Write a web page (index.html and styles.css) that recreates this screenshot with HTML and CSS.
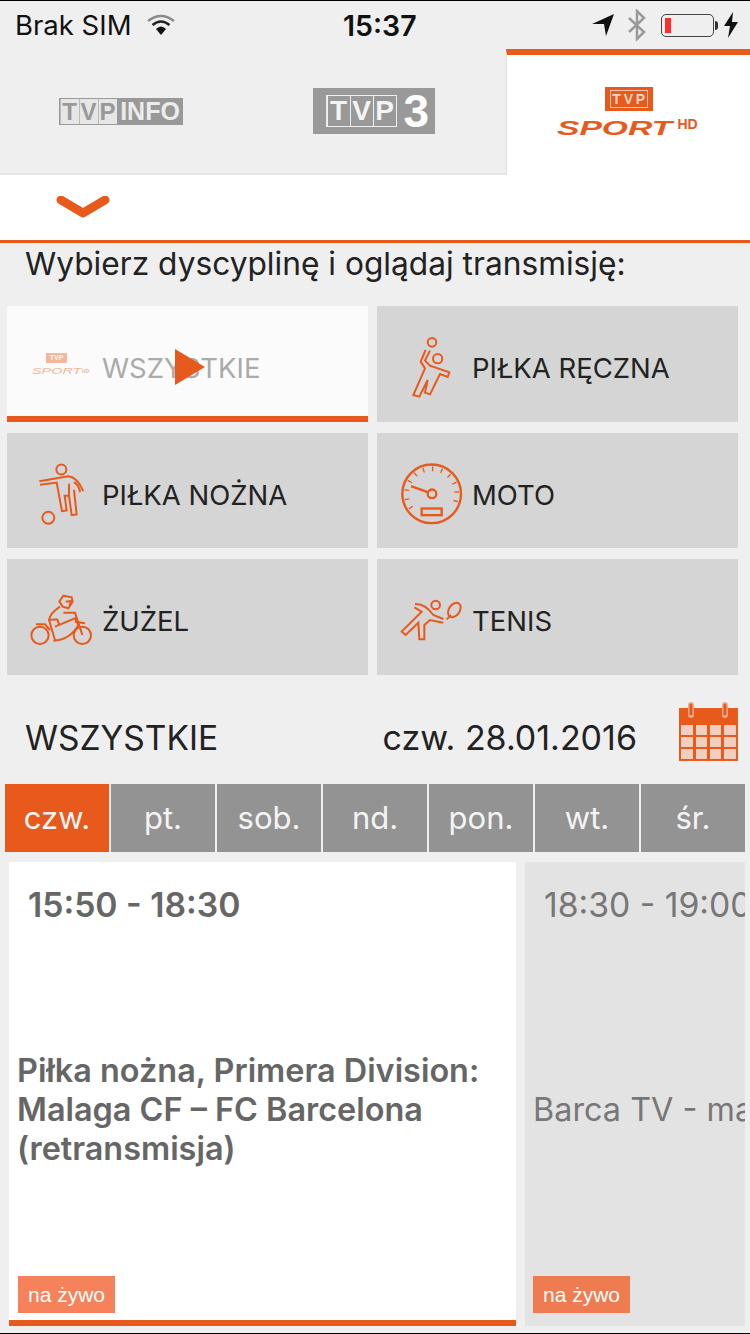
FILE: index.html
```html
<!DOCTYPE html>
<html lang="pl">
<head>
    <meta charset="UTF-8">
    <meta name="viewport" content="width=device-width, initial-scale=1.0">
    <title>TVP Sport</title>
    <link rel="stylesheet" href="styles.css">
</head>
<body>
<div class="screen">

    <!-- Status bar -->
    <div class="status-bar">
        <div class="status-left">
            <span>Brak SIM</span>
            <svg class="wifi" width="28" height="22" viewBox="0 0 28 22">
                <path d="M1 7 Q14 -3 27 7" fill="none" stroke="#8a8a8a" stroke-width="2.4"/>
                <path d="M5.500 11 Q14 4 22.500 11" fill="none" stroke="#222" stroke-width="2.600"/>
                <path d="M9 15 Q14 10 19 15 L14 21 Z" fill="#111"/>
            </svg>
        </div>
        <div class="status-time">15:37</div>
        <div class="status-right">
            <svg width="24" height="24" viewBox="0 0 24 24"><path d="M1 11 L23 1 L15 23 L13 11 Z" fill="#111"/></svg>
            <svg class="bt" width="20" height="32" viewBox="0 0 20 32"><path d="M2 9 L17 23 L10 30 L10 2 L17 9 L2 23" fill="none" stroke="#9a9a9a" stroke-width="2.500"/></svg>
            <div class="battery"><div class="battery-level"></div></div>
            <div class="battery-nub"></div>
            <svg class="bolt" width="14" height="26" viewBox="0 0 14 26"><path d="M9 0 L0 14 L6 14 L4 26 L14 10 L8 10 Z" fill="#111"/></svg>
        </div>
    </div>

    <!-- Kanaly -->
    <div class="channels">
        <div class="channel">
            <div class="logo-info">
                <div class="tvp-cells"><span>T</span><span>V</span><span>P</span></div>
                <span class="info-name">INFO</span>
            </div>
        </div>
        <div class="channel">
            <div class="logo-tvp3">
                <div class="tvp-cells"><span>T</span><span>V</span><span>P</span></div>
                <span class="three">3</span>
            </div>
        </div>
        <div class="channel active">
            <div class="logo-sport">
                <div class="sport-box"><div class="tvp-cells"><span>T</span><span>V</span><span>P</span></div></div>
                <div class="sport-name"><span class="sport-word">SPORT</span><span class="sport-hd">HD</span></div>
            </div>
        </div>
    </div>

    <div class="sub-bar">
        <svg width="54" height="24" viewBox="0 0 54 24"><path d="M5 4 L27 17 L49 4" fill="none" stroke="#e8591c" stroke-width="9" stroke-linecap="round" stroke-linejoin="round"/></svg>
    </div>

    <h1 class="lead">Wybierz dyscyplinę i oglądaj transmisję:</h1>

    <!-- Dyscypliny -->
    <div class="disciplines">
        <div class="cell selected">
            <div class="faded">
                <div class="mini-logo">
                    <div class="mini-box">TVP</div>
                    <div class="mini-name"><span class="mini-word">SPORT</span><span class="mini-hd">HD</span></div>
                </div>
                <span class="cell-name">WSZYSTKIE</span>
            </div>
            <svg class="play" width="30" height="36" viewBox="0 0 30 36"><path d="M0 0 L30 18 L0 36 Z" fill="#e8591c"/></svg>
        </div>
        <div class="cell">
            <svg class="cell-icon" viewBox="75 96 192 192">
                <circle cx="171" cy="127" r="13"/>
                <circle cx="188" cy="176" r="14"/>
                <path d="M152 150 L137 185 L150 205 L115 285 L133 290 L158 240 L150 278 L165 283 L195 222 L218 231 L223 217 L165 197 L150 182 L165 152"/>
            </svg>
            <span class="cell-name">PIŁKA RĘCZNA</span>
        </div>
        <div class="cell">
            <svg class="cell-icon" viewBox="90 475.500 192 192">
                <circle cx="184" cy="507" r="15"/>
                <circle cx="145" cy="652" r="18"/>
                <path d="M118 542 L205 527 Q232 530 250 572"/>
                <path d="M120 553 L170 546 L186 632 L200 630 L194 586 L207 586 L215 644 L230 642 L222 568"/>
                <path d="M207 586 L207 550 M222 545 Q238 555 240 575"/>
            </svg>
            <span class="cell-name">PIŁKA NOŻNA</span>
        </div>
        <div class="cell">
            <svg class="cell-icon" viewBox="75 475.500 192 192">
                <circle cx="170" cy="580" r="88" stroke-width="7"/>
                <circle cx="171" cy="580" r="13" stroke-width="7"/>
                <path d="M108 557 L158 575" stroke-width="7"/>
                <rect x="140" y="624" width="60" height="20" stroke-width="7"/>
                <path d="M108.600 623 A75 75 0 1 1 231.400 623" stroke-width="14" stroke-dasharray="4 23.270"/>
            </svg>
            <span class="cell-name">MOTO</span>
        </div>
        <div class="cell">
            <svg class="cell-icon" viewBox="90 855 192 192">
                <circle cx="120" cy="1006" r="26"/>
                <circle cx="247" cy="1006" r="26"/>
                <path d="M178 905 L190 887 L215 892 L218 905 L205 925 L188 920 Z"/>
                <path d="M197 905 L214 903 L208 915"/>
                <path d="M180 920 Q150 940 147 960 L165 1020"/>
                <path d="M190 938 L225 938 L247 1005"/>
                <path d="M165 980 L225 955 L235 975 Q210 1020 160 1022"/>
                <path d="M108 973 L135 973 L150 990 M225 965 L255 970"/>
                <path d="M172 958 L178 975 M147 960 L172 958"/>
            </svg>
            <span class="cell-name">ŻUŻEL</span>
        </div>
        <div class="cell">
            <svg class="cell-icon" viewBox="75 855 192 192">
                <circle cx="182" cy="915" r="13"/>
                <ellipse cx="238" cy="930" rx="16" ry="24" transform="rotate(35 238 930)"/>
                <path d="M215 958 L228 945"/>
                <path d="M120 912 Q150 910 175 945 L205 957"/>
                <path d="M205 968 L165 960 L148 975 L148 1018 L133 1018 L130 968 L92 1005 L80 995 L140 935 L118 922"/>
            </svg>
            <span class="cell-name">TENIS</span>
        </div>
    </div>

    <!-- Data -->
    <div class="date-row">
        <span class="date-category">WSZYSTKIE</span>
        <span class="date-value">czw. 28.01.2016</span>
        <svg class="calendar" width="59" height="60" viewBox="0 0 59 60">
            <rect x="0" y="6" width="59" height="53" fill="#e8591c"/>
            <path d="M12 3 V13 M46 3 V13" stroke="#f3a98a" stroke-width="6" stroke-linecap="round"/>
            <path d="M12 3 V12 M46 3 V12" stroke="#e8591c" stroke-width="3" stroke-linecap="round"/>
            <g fill="#f1cfc0">
                <rect x="2" y="23" width="12" height="10"/><rect x="17" y="23" width="11" height="10"/><rect x="31" y="23" width="11" height="10"/><rect x="45" y="23" width="12" height="10"/>
                <rect x="2" y="35" width="12" height="10"/><rect x="17" y="35" width="11" height="10"/><rect x="31" y="35" width="11" height="10"/><rect x="45" y="35" width="12" height="10"/>
                <rect x="2" y="47" width="12" height="10"/><rect x="17" y="47" width="11" height="10"/><rect x="31" y="47" width="11" height="10"/><rect x="45" y="47" width="12" height="10"/>
            </g>
        </svg>
    </div>

    <!-- Dni -->
    <div class="days">
        <div class="day current">czw.</div>
        <div class="day">pt.</div>
        <div class="day">sob.</div>
        <div class="day">nd.</div>
        <div class="day">pon.</div>
        <div class="day">wt.</div>
        <div class="day">śr.</div>
    </div>

    <!-- Program -->
    <div class="programmes">
        <div class="programme now">
            <div class="programme-time">15:50 - 18:30</div>
            <div class="programme-title">Piłka nożna, Primera Division: Malaga CF – FC Barcelona (retransmisja)</div>
            <div class="badge">na żywo</div>
        </div>
        <div class="programme next">
            <div class="programme-time">18:30 - 19:00</div>
            <div class="programme-title">Barca TV - ma</div>
            <div class="badge">na żywo</div>
        </div>
    </div>
</div>
</body>
</html>
```
FILE: styles.css
```css
* {
    box-sizing: border-box;
}
html, body {
    margin: 0;
    padding: 0;
    height: 1334px;
    overflow: hidden;
}
body {
    background-color: #efefef;
    font-family: Inter, "Liberation Sans", sans-serif;
    color: #222;
}
.screen {
    height: 1334px;
    border-top: 1px solid #000;
    border-bottom: 1px solid #000;
    overflow: hidden;
}

/* status bar */
.status-bar {
    height: 48px;
    padding: 0 12px 0 15px;
    display: flex;
    align-items: center;
    justify-content: space-between;
    font-size: 27.500px;
    color: #111;
}
.status-left {
    display: flex;
    align-items: center;
    gap: 15px;
}
.status-time {
    width: 76px;
    margin-left: -6px;
    font-weight: 600;
    font-size: 28.500px;
    text-align: center;
}
.status-right {
    display: flex;
    align-items: center;
}
.status-right .bt {
    margin-left: 12px;
}
.battery {
    width: 53px;
    height: 23px;
    margin-left: 14px;
    padding: 3px;
    border: 1.500px solid #444;
    border-radius: 5px;
}
.battery-level {
    width: 6px;
    height: 100%;
    background-color: #ff2d2d;
}
.battery-nub {
    width: 3px;
    height: 9px;
    margin-left: 1px;
    background-color: #333;
    border-radius: 0 3px 3px 0;
}
.status-right .bolt {
    margin-left: 6px;
}

/* channels */
.channels {
    display: flex;
    height: 126px;
}
.channel {
    width: 253px;
    padding-right: 12px;
    display: flex;
    align-items: center;
    justify-content: center;
    border-bottom: 2px solid #e6e6e6;
}
.channel.active {
    width: 244px;
    padding: 0 0 6px;
    background-color: #fff;
    border-top: 6px solid #e8591c;
    border-left: 1px solid #e2e2e2;
    border-bottom: none;
}
.tvp-cells {
    display: flex;
}
.tvp-cells span {
    display: block;
    text-align: center;
    font-family: "Liberation Sans", sans-serif;
    font-weight: 700;
}
.logo-info {
    width: 124px;
    height: 27px;
    display: flex;
    background-color: #999;
}
.logo-info .tvp-cells {
    background-color: #e6e6e6;
    border: 1px solid #999;
}
.logo-info .tvp-cells span {
    width: 19px;
    font-size: 24px;
    line-height: 25px;
    color: #999;
    border-left: 1px solid #bbb;
}
.info-name {
    flex: 1;
    text-align: center;
    font-family: "Liberation Sans", sans-serif;
    font-weight: 700;
    font-size: 25px;
    line-height: 27px;
    color: #ececec;
}
.logo-tvp3 {
    width: 122px;
    height: 46px;
    padding: 7px 0 0 13px;
    display: flex;
    background-color: #999;
}
.logo-tvp3 .tvp-cells {
    height: 32px;
    border: 1px solid #eee;
}
.logo-tvp3 .tvp-cells span {
    width: 23px;
    font-size: 28px;
    line-height: 30px;
    color: #f4f4f4;
    border-left: 1px solid #eee;
}
.three {
    margin: -7px 0 0 7px;
    font-family: "Liberation Sans", sans-serif;
    font-weight: 700;
    font-size: 46px;
    line-height: 46px;
    color: #fff;
}
.logo-sport {
    display: flex;
    flex-direction: column;
    align-items: center;
    gap: 9px;
    color: #e8591c;
    margin-top: -1px;
}
.sport-box {
    width: 48px;
    height: 24px;
    padding: 3px 5px;
    background-color: #e8591c;
}
.sport-box .tvp-cells {
    height: 18px;
    border: 1px solid #f7c4ad;
}
.sport-box .tvp-cells span {
    width: 12px;
    font-size: 14px;
    line-height: 16px;
    color: #f7d5c5;
}
.sport-name {
    width: 140px;
    height: 16px;
    margin-left: -4px;
    position: relative;
    font-family: "Liberation Sans", sans-serif;
    font-weight: 700;
}
.sport-word {
    position: absolute;
    left: 0;
    top: -4px;
    font-size: 21px;
    line-height: 24px;
    font-style: italic;
    transform: scaleX(1.600);
    transform-origin: left center;
}
.sport-hd {
    position: absolute;
    left: 121px;
    top: -3px;
    font-size: 14px;
    line-height: 14px;
}

.sub-bar {
    height: 68px;
    padding: 21px 0 0 56px;
    background-color: #fff;
    border-bottom: 3px solid #e8591c;
}
.lead {
    margin: 0;
    height: 63px;
    padding-left: 25px;
    font-size: 31.700px;
    font-weight: 400;
    line-height: 42px;
    color: #222;
}

/* disciplines */
.disciplines {
    margin-left: 7px;
    width: 731px;
    display: grid;
    grid-template-columns: 361px 361px;
    grid-template-rows: 116px 115px 116px;
    gap: 11px 9px;
}
.cell {
    display: flex;
    align-items: center;
    padding-left: 23px;
    background-color: #d5d5d5;
    position: relative;
}
.cell-icon {
    width: 64px;
    height: 64px;
    flex-shrink: 0;
    overflow: visible;
    fill: none;
    stroke: #e8591c;
    stroke-width: 6;
}
.cell-name {
    margin: 8px 0 0 8px;
    font-size: 27.500px;
    color: #222;
}
.cell.selected {
    background-color: #fbfbfb;
    border-bottom: 6px solid #e8591c;
}
.faded {
    display: flex;
    align-items: center;
    padding-top: 6px;
}
.faded .cell-name {
    color: #aaa;
}
.mini-logo {
    width: 64px;
    display: flex;
    flex-direction: column;
    align-items: flex-start;
    color: #f4b69c;
    font-family: "Liberation Sans", sans-serif;
    font-weight: 700;
}
.mini-box {
    width: 21px;
    height: 10px;
    margin-left: 16px;
    background-color: #f4b69c;
    color: #fbfbfb;
    font-size: 7px;
    line-height: 10px;
    text-align: center;
}
.mini-name {
    width: 62px;
    height: 10px;
    margin: 3px 0 0 2px;
    position: relative;
}
.mini-word {
    position: absolute;
    left: 0;
    top: 0;
    font-size: 9px;
    line-height: 10px;
    font-style: italic;
    font-weight: 400;
    transform: scaleX(1.600);
    transform-origin: left center;
}
.mini-hd {
    position: absolute;
    left: 50px;
    top: 0;
    font-size: 5px;
    line-height: 10px;
}
.play {
    position: absolute;
    left: 168px;
    top: 43px;
}

/* date row */
.date-row {
    height: 109px;
    padding: 0 12px 0 25px;
    display: flex;
    align-items: center;
    color: #222;
}
.date-category {
    width: 358px;
    margin-top: 16px;
    font-size: 33.500px;
}
.date-value {
    width: 296px;
    margin-top: 16px;
    font-size: 34px;
}
.calendar {
    margin: 5px 0 0 1px;
}

/* days */
.days {
    margin-left: 5px;
    width: 740px;
    display: flex;
    gap: 2px;
}
.day {
    flex: 1;
    height: 68px;
    background-color: #939393;
    color: #f4f4f4;
    font-size: 31px;
    line-height: 68px;
    text-align: center;
}
.day.current {
    background-color: #e8591c;
}

/* programmes */
.programmes {
    margin: 10px 0 0 9px;
    width: 736px;
    height: 464px;
    display: flex;
    gap: 9px;
    overflow: hidden;
}
.programme {
    flex-shrink: 0;
    width: 507px;
    height: 464px;
    position: relative;
    overflow: hidden;
}
.programme.now {
    background-color: #fff;
    border-bottom: 6px solid #e8591c;
}
.programme.next {
    width: 220px;
    background-color: #e3e3e3;
}
.programme-time {
    position: absolute;
    left: 19px;
    top: 23px;
    font-size: 33.700px;
    line-height: 40px;
    font-weight: 600;
    color: #666;
    white-space: nowrap;
}
.programme-title {
    position: absolute;
    left: 8px;
    top: 189px;
    width: 490px;
    font-size: 32.400px;
    line-height: 39px;
    font-weight: 600;
    color: #666;
}
.next .programme-time {
    font-weight: 400;
    color: #777;
}
.next .programme-title {
    top: 228px;
    width: 212px;
    font-weight: 400;
    color: #777;
    white-space: nowrap;
}
.badge {
    position: absolute;
    left: 9px;
    top: 414px;
    width: 97px;
    height: 37px;
    background-color: #f5825a;
    color: #fff;
    font-family: "Liberation Sans", sans-serif;
    font-size: 21px;
    line-height: 37px;
    text-align: center;
}
.next .badge {
    left: 8px;
    background-color: #ef7c50;
}
```
